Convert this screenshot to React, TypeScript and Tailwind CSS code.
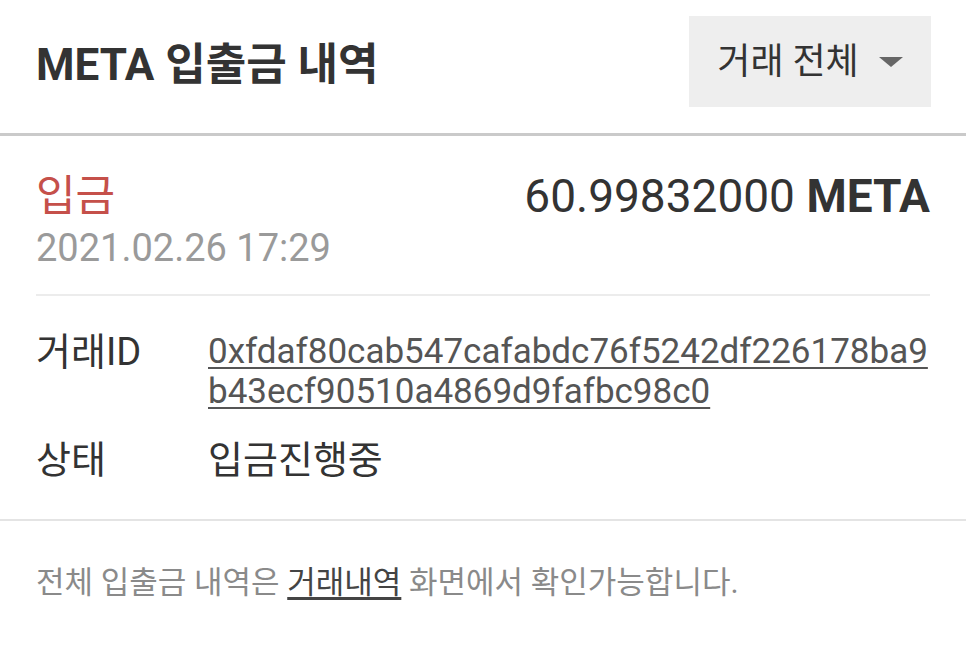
export default function App() {
  const hash1 = "0xfdaf80cab547cafabdc76f5242df226178ba9"
  const hash2 = "b43ecf90510a4869d9fafbc98c0"

  return (
    <div className="w-[966px] h-[648px] bg-white text-[#333] font-['Roboto','Noto_Sans_CJK_KR',sans-serif] overflow-hidden">
      <header className="flex justify-between h-[136px] pl-9 pr-[35px] border-b-[3px] border-[#cacaca]">
        <h1 className="self-center mb-1 text-[44px] leading-[52px] font-bold">META 입출금 내역</h1>
        <button className="mt-4 h-[91px] w-[242px] bg-[#eeeeee] flex items-center justify-center gap-5 text-[36px] text-[#333]">
          <span>거래 전체</span>
          <svg width="24" height="10" viewBox="0 0 24 10">
            <path d="M0 0 H24 L12 10 Z" fill="#666" />
          </svg>
        </button>
      </header>

      <section className="px-9 pt-9">
        <div className="flex justify-between items-center h-12">
          <span className="text-[43px] text-[#c5504a]">입금</span>
          <span className="text-[46px]">
            60.99832000 <b className="font-bold">META</b>
          </span>
        </div>
        <div className="mt-1.5 text-[38px] leading-[44px] text-[#9a9a9a]">2021.02.26 17:29</div>

        <div className="mt-6 border-t-2 border-[#ececec]" />

        <div className="pt-9 flex text-[38px] leading-[40px]">
          <div className="w-[172px] shrink-0">거래ID</div>
          <a className="text-[35px] underline underline-offset-4 decoration-2 text-[#555]">
            {hash1}
            <br />
            {hash2}
          </a>
        </div>
        <div className="mt-7 pb-[39px] flex text-[38px] leading-[40px]">
          <div className="w-[172px] shrink-0">상태</div>
          <div>입금진행중</div>
        </div>
      </section>

      <div className="border-t-2 border-[#e4e4e4]" />

      <p className="px-9 pt-11 text-[31px] leading-9 text-[#8a8a8a]">
        전체 입출금 내역은 <span className="underline underline-offset-4 text-[#444]">거래내역</span> 화면에서 확인가능합니다.
      </p>
    </div>
  )
}
